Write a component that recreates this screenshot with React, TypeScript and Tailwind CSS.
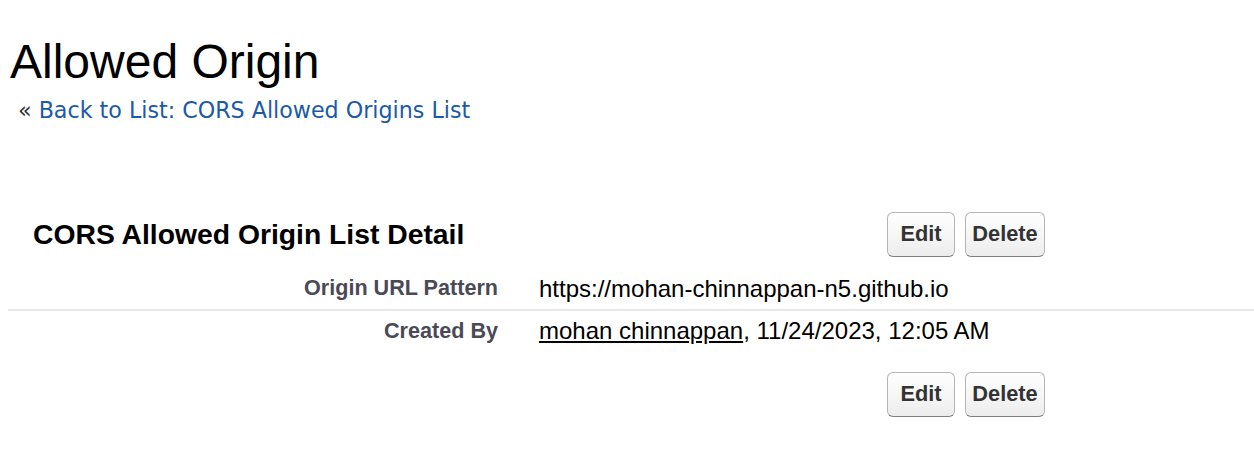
import React from "react";

const Buttons = () => (
  <div className="flex gap-[10px]">
    <button
      type="button"
      className="h-[45px] w-[68px] rounded-[6px] border border-[#b5b5b5] border-b-[#7f7f7f] bg-gradient-to-b from-white to-[#ededed] text-[21.8px] font-bold text-[#333]"
    >
      Edit
    </button>
    <button
      type="button"
      className="h-[45px] w-[80px] rounded-[6px] border border-[#b5b5b5] border-b-[#7f7f7f] bg-gradient-to-b from-white to-[#ededed] text-[21.8px] font-bold text-[#333]"
    >
      Delete
    </button>
  </div>
);

const rows = [
  { label: "Origin URL Pattern", value: <span>https://mohan-chinnappan-n5.github.io</span> },
  {
    label: "Created By",
    value: (
      <span>
        <a className="underline">mohan chinnappan</a>, 11/24/2023, 12:05 AM
      </span>
    ),
  },
];

export default function App() {
  return (
    <div className="min-h-screen bg-white font-['Liberation_Sans',Arial,sans-serif] text-black">
      <div className="pl-[10px] pt-[36px]">
        <h1 className="text-[48px] leading-[52px]">Allowed Origin</h1>
        <div className="mt-[8px] pl-[8px] font-['DejaVu_Sans',Verdana,sans-serif] text-[22.2px] leading-[28px]">
          <span className="text-[#333]">«</span>{" "}
          <a className="text-[#1b5aa6]">Back to List: CORS Allowed Origins List</a>
        </div>
      </div>

      <div className="ml-[8px] mt-[86px]">
        <div className="flex h-[48px] items-center">
          <h2 className="w-[879px] pl-[25px] text-[28.3px] font-bold">
            CORS Allowed Origin List Detail
          </h2>
          <Buttons />
        </div>

        <div className="mt-[10px]">
          <div className="flex h-[43px] items-center border-b-2 border-[#e8e8e8]">
            <div className="w-[490px] text-right text-[21.6px] font-bold text-[#4a4a56]">
              {rows[0].label}
            </div>
            <div className="pl-[41px] text-[24px]">{rows[0].value}</div>
          </div>
          <div className="flex h-[40px] items-center">
            <div className="w-[490px] text-right text-[21.6px] font-bold text-[#4a4a56]">
              {rows[1].label}
            </div>
            <div className="pl-[41px] text-[24px]">{rows[1].value}</div>
          </div>
        </div>

        <div className="mt-[21px] pl-[879px]">
          <Buttons />
        </div>
      </div>
    </div>
  );
}
